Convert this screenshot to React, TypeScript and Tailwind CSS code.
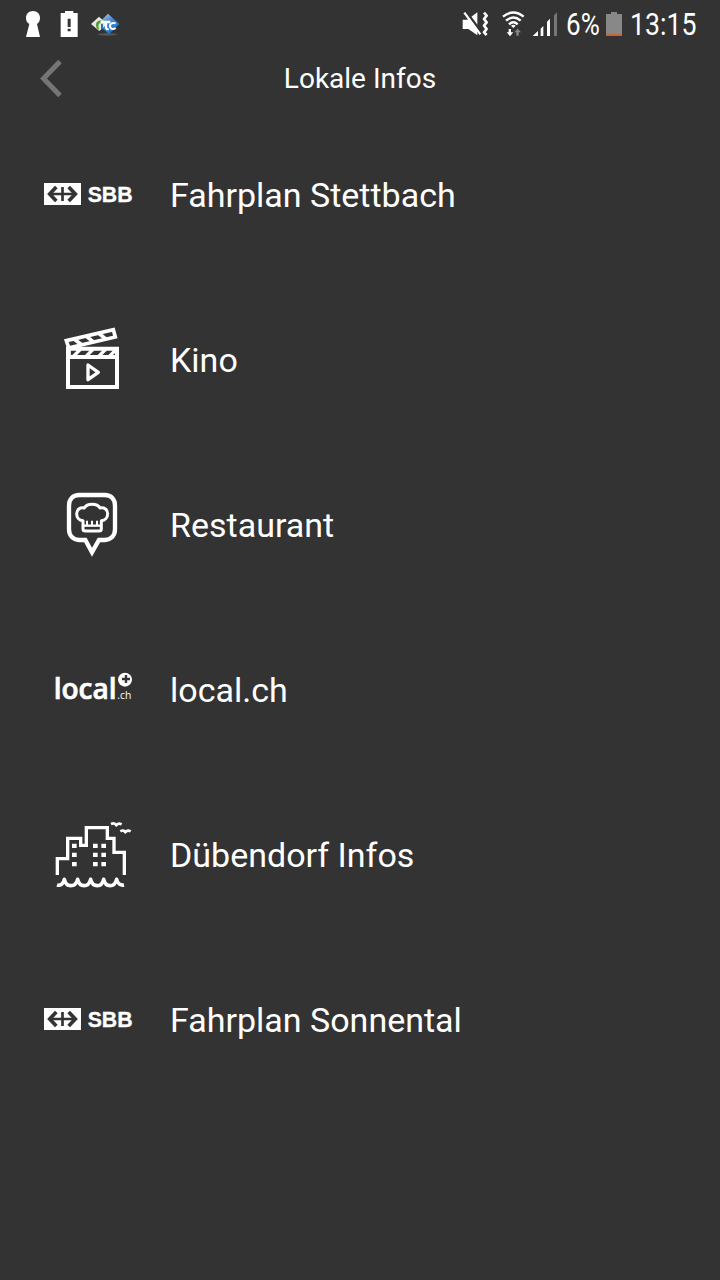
import type { ReactNode } from 'react';

function SbbLogo() {
  return (
    <svg viewBox="15 -45 300 240" className="w-[100px] h-20" fill="#fff">
      <path fillRule="evenodd" d="M27 39H138V105H27Z" />
      <g fill="none" stroke="#333" strokeWidth="8">
        <path d="M49 72H116M82.500 51V93" />
        <path d="M64 51L44 72L64 93" strokeWidth="11" />
        <path d="M101 51L121 72L101 93" strokeWidth="11" />
      </g>
      <text x="158" y="96" fontFamily="Liberation Sans, sans-serif" fontWeight="700" fontSize="67" textLength="135" lengthAdjust="spacingAndGlyphs" stroke="#fff" strokeWidth="1">SBB</text>
    </svg>
  );
}

function ClapperIcon() {
  return (
    <svg viewBox="-30 15 300 240" className="w-[100px] h-20" fill="none" stroke="#fff" strokeWidth="12">
      <path d="M54 101H201V216H54Z" />
      <path d="M54 126H202" />
      <path d="M57 126V101L49 77L190 44L196 66L58 98" strokeWidth="11" />
      <path d="M72 72L96 90M108 63L132 82M145 54L169 73" strokeWidth="11" />
      <path d="M70 124L92 102M108 124L130 102M146 124L168 102M178 124L200 102" strokeWidth="10" />
      <path d="M114 150L145 172L114 194Z" strokeWidth="10" strokeLinejoin="round" />
    </svg>
  );
}

function ChefPinIcon() {
  return (
    <svg viewBox="-30 15 300 240" className="w-[100px] h-20" fill="none" stroke="#fff">
      <path d="M88 45H164C184 45 195 58 195 77V147C195 167 184 179 164 180H147L126 217L106 180H88C68 179 57 167 57 147V77C57 58 68 45 88 45Z" strokeWidth="13" />
      <path d="M99 122C87 121 80 112 80 101C80 89 90 81 103 84C107 77 115 73 126 73C137 73 146 77 150 84C163 81 173 89 173 101C173 112 165 121 154 122V146Q154 153 147 153H106Q99 153 99 146Z" strokeWidth="9" strokeLinejoin="round" />
      <path d="M100 137H153" strokeWidth="7" />
      <path d="M111 122V135M126 122V135M141 122V135" strokeWidth="6" />
    </svg>
  );
}

function LocalLogo() {
  return (
    <svg viewBox="-15 -30 300 240" className="w-[100px] h-20" fill="#fff">
      <text x="26" y="117" fontFamily="Open Sans, sans-serif" fontWeight="600" fontSize="86" textLength="189" lengthAdjust="spacingAndGlyphs" stroke="#fff" strokeWidth="2">local</text>
      <text x="217" y="117" fontFamily="Open Sans, sans-serif" fontSize="31" textLength="42" lengthAdjust="spacingAndGlyphs">.ch</text>
      <circle cx="240" cy="59" r="21" />
      <path d="M243 45V69M231 57H255" stroke="#333" strokeWidth="7" />
    </svg>
  );
}

function CityIcon() {
  return (
    <svg viewBox="-15 15 300 240" className="w-[100px] h-20" fill="none" stroke="#fff" strokeWidth="10">
      <path d="M37 195V146H68V85H107V106H124V53H187V85H207V127H238V195" />
      <path d="M36 225C46 228 56 221 58 208C61 221 67 227 77 227C88 227 95 220 98 208C101 221 107 227 117 227C128 227 134 220 137 208C140 221 147 227 157 227C167 227 173 220 176 208C179 221 185 227 195 227C206 227 212 220 215 208C218 221 227 227 237 225" strokeLinejoin="round" strokeWidth="11" />
      <path d="M198 42Q209 37 214 46Q219 37 230 43M226 64Q236 58 241 67Q247 58 257 64" strokeWidth="8" strokeLinejoin="round" />
      <g fill="#fff" stroke="none">
        <path d="M81 101h14v13h-14zM81 128h14v13h-14zM81 156h14v13h-14z" />
        <path d="M144 101h14v13h-14zM144 128h14v13h-14zM144 156h14v13h-14z" />
        <path d="M169 101h14v13h-14zM169 128h14v13h-14zM169 156h14v13h-14z" />
      </g>
    </svg>
  );
}

const ITEMS: { id: string; label: string; icon: ReactNode }[] = [
  { id: 'stettbach', label: 'Fahrplan Stettbach', icon: <SbbLogo /> },
  { id: 'kino', label: 'Kino', icon: <ClapperIcon /> },
  { id: 'restaurant', label: 'Restaurant', icon: <ChefPinIcon /> },
  { id: 'local', label: 'local.ch', icon: <LocalLogo /> },
  { id: 'duebendorf', label: 'Dübendorf Infos', icon: <CityIcon /> },
  { id: 'sonnental', label: 'Fahrplan Sonnental', icon: <SbbLogo /> },
];

function NotificationIcons() {
  return (
    <svg viewBox="0 0 390 144" className="w-[130px] h-12" fill="#fff">
      <path d="M69 33C82 33 90 42 90 54C90 63 86 69 81 72L90 111H48L58 72C52 69 48 63 48 54C48 42 56 33 69 33Z" />
      <path d="M165 33H190V39H203V111H152V39H165Z" />
      <path d="M173 56H182V81H173ZM173 86H182V94H173Z" fill="#333" />
      <defs>
        <linearGradient id="blue" x1="0" y1="0" x2="0.600" y2="1">
          <stop offset="0" stopColor="#c3dcef" />
          <stop offset="0.500" stopColor="#4a86c8" />
          <stop offset="1" stopColor="#1274c9" />
        </linearGradient>
      </defs>
      <ellipse cx="292" cy="103" rx="30" ry="4" fill="#555" />
      <path d="M294 41L328 72L297 103L263 72Z" fill="url(#blue)" />
      <path d="M267 50L291 72L268 93L243 72Z" fill="#e3ebe0" />
      <path d="M262 87C252 72 261 60 275 61L271 70C264 72 264 80 268 88Z" fill="#579c31" />
      <path d="M272 66H301M288 66V82Q289 89 296 87" fill="none" stroke="#fff" strokeWidth="7" />
      <path d="M317 70C305 66 297 73 301 82C304 89 312 88 317 84" fill="none" stroke="#fff" strokeWidth="6" />
      <path d="M276 71V88" stroke="#2275ad" strokeWidth="6" />
    </svg>
  );
}

function SignalIcons() {
  return (
    <svg viewBox="0 0 330 144" className="w-[110px] h-12" fill="#fff">
      {/* muted + vibrate */}
      <path d="M38 59H52L82 37V106L55 87H38Z" />
      <path d="M49 36L97 101" stroke="#333" strokeWidth="8" />
      <path d="M43 38L91 103" stroke="#fff" strokeWidth="7" />
      <path d="M102 38L110 47L102 57L110 67L102 77L110 87L102 97L110 105" fill="none" stroke="#fff" strokeWidth="8" strokeLinejoin="round" />
      {/* wifi */}
      <g fill="none" stroke="#fff" strokeWidth="7">
        <path d="M159 50Q190 25 221 50" />
        <path d="M168 62Q190 43 212 62" />
        <path d="M177 73Q190 61 203 73" />
      </g>
      <path d="M183 77Q190 72 197 77L190 84Z" />
      <path d="M176 87H183V97H190L180 109L170 97H176Z" />
      <path d="M199 107H206V97H213L203 86L193 97H199Z" fill="#888" />
      {/* cell signal */}
      <path d="M248 108L264 93V108ZM272 86L280 78V108H272ZM291 65L300 56V108H291Z" />
      <path d="M312 46L321 37V108H312Z" fill="#777" />
    </svg>
  );
}

function StatusBar() {
  return (
    <div className="flex h-12 items-center justify-between">
      <div className="ml-[10px]"><NotificationIcons /></div>
      <div className="flex h-12 items-center pr-[22px] text-[31px] leading-none">
        <SignalIcons />
        <span className="ml-[6px] w-[34px] whitespace-nowrap origin-left scale-x-[0.84]">6%</span>
        <svg viewBox="0 0 16 24" className="ml-[6px] w-4 h-6">
          <path d="M5 0H11V2H16V24H0V2H5Z" fill="#888" />
          <path d="M0 22H16V24H0Z" fill="#c8643c" />
        </svg>
        <span className="ml-[8px] w-[68px] whitespace-nowrap origin-left scale-x-[0.86]">13:15</span>
      </div>
    </div>
  );
}

export default function App() {
  return (
    <div className="w-[720px] h-[1280px] overflow-hidden bg-[#333] text-white font-[Roboto,sans-serif]">
      <StatusBar />

      <header className="grid grid-cols-[1fr_auto_1fr] h-[60px] items-center">
        <button className="ml-10 w-6 h-10" aria-label="Zurück">
          <svg viewBox="0 0 24 40" className="w-6 h-10" fill="none" stroke="#757575" strokeWidth="5">
            <path d="M20 3.500L3.500 20.500L20 37.500" />
          </svg>
        </button>
        <h1 className="pt-0.5 text-[28px] leading-[58px]">Lokale Infos</h1>
      </header>

      <ul className="mt-[47px] flex flex-col gap-[85px]">
        {ITEMS.map(item => (
          <li key={item.id} className="flex h-20 items-center pl-10">
            {item.icon}
            <span className="ml-[30px] text-[34px] leading-10">{item.label}</span>
          </li>
        ))}
      </ul>
    </div>
  );
}
